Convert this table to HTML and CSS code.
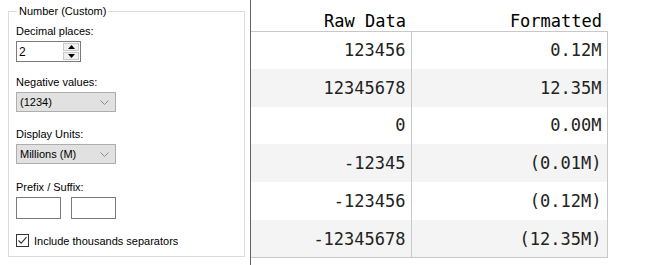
FILE: index.html
```html
<!DOCTYPE html>
<html>
<head>
<meta charset="utf-8">
<link rel="stylesheet" href="styles.css">
</head>
<body>
<div class="app">
  <aside class="panel">
    <fieldset class="group">
      <legend class="legend">Number (Custom)</legend>
      <div class="field f-dec">
        <div class="label">Decimal places:</div>
        <div class="spin">
          <span class="spin-val">2</span>
          <span class="spin-btns">
            <span class="sb"><svg width="7" height="4" viewBox="0 0 7 4"><path d="M3.5 0 L7 4 L0 4 Z" fill="#000"/></svg></span>
            <span class="sb"><svg width="7" height="4" viewBox="0 0 7 4"><path d="M0 0 L7 0 L3.5 4 Z" fill="#000"/></svg></span>
          </span>
        </div>
      </div>
      <div class="field f-neg">
        <div class="label">Negative values:</div>
        <div class="select"><span>(1234)</span><svg class="chev" width="9" height="5" viewBox="0 0 9 5"><path d="M0.5 0.5 L4.5 4.5 L8.5 0.5" fill="none" stroke="#8a8a8a" stroke-width="1"/></svg></div>
      </div>
      <div class="field f-units">
        <div class="label">Display Units:</div>
        <div class="select"><span>Millions (M)</span><svg class="chev" width="9" height="5" viewBox="0 0 9 5"><path d="M0.5 0.5 L4.5 4.5 L8.5 0.5" fill="none" stroke="#8a8a8a" stroke-width="1"/></svg></div>
      </div>
      <div class="field f-fix">
        <div class="label">Prefix / Suffix:</div>
        <div class="fix-row">
          <span class="textbox"></span>
          <span class="textbox"></span>
        </div>
      </div>
      <div class="check-row">
        <span class="checkbox"><svg width="11" height="11" viewBox="0 0 11 11"><path d="M1.5 5.5 L4.2 8.2 L9.5 2.2" fill="none" stroke="#333" stroke-width="1.1"/></svg></span>
        <span class="check-label">Include thousands separators</span>
      </div>
    </fieldset>
  </aside>
  <div class="divider"></div>
  <main class="grid-area">
    <table class="grid">
      <thead>
        <tr><th class="c1">Raw Data</th><th class="c2">Formatted</th></tr>
      </thead>
      <tbody>
        <tr><td class="c1">123456</td><td class="c2">0.12M</td></tr>
        <tr class="alt"><td class="c1">12345678</td><td class="c2">12.35M</td></tr>
        <tr><td class="c1">0</td><td class="c2">0.00M</td></tr>
        <tr class="alt"><td class="c1">-12345</td><td class="c2">(0.01M)</td></tr>
        <tr><td class="c1">-123456</td><td class="c2">(0.12M)</td></tr>
        <tr class="alt"><td class="c1">-12345678</td><td class="c2">(12.35M)</td></tr>
      </tbody>
    </table>
  </main>
</div>
</body>
</html>
```
FILE: styles.css
```css
html, body {
  margin: 0;
  padding: 0;
  background: #fff;
}
.app {
  display: flex;
  width: 648px;
  height: 265px;
  overflow: hidden;
}
.panel {
  width: 250px;
  flex: none;
  font-family: "Liberation Sans", Arial, sans-serif;
  font-size: 11px;
  color: #000;
}
.group {
  margin: 4px 0 0 8px;
  width: 237px;
  height: 253px;
  box-sizing: border-box;
  border: 1px solid #dcdcdc;
  padding: 0 7px;
  min-width: 0;
}
.legend {
  padding: 0 2px;
  margin-left: 1px;
  line-height: 14px;
  height: 14px;
}
.label {
  line-height: 14px;
  height: 14px;
  margin-bottom: 3px;
}
.f-dec { margin-top: 6px; }
.f-neg { margin-top: 13px; }
.f-units { margin-top: 15px; }
.f-fix { margin-top: 16px; }

.spin {
  width: 65px;
  height: 21px;
  box-sizing: border-box;
  border: 1px solid #7a7a7a;
  display: flex;
  align-items: center;
  background: #fff;
}
.spin-val {
  flex: 1;
  padding-left: 2px;
  font-size: 12px;
}
.spin-btns {
  display: flex;
  flex-direction: column;
  width: 16px;
  height: 17px;
  margin-right: 1px;
  gap: 1px;
}
.sb {
  flex: 1;
  display: flex;
  align-items: center;
  justify-content: center;
  background: #f0f0f0;
  border: 1px solid #c9c9c9;
  box-sizing: border-box;
}
.select {
  width: 100px;
  height: 20px;
  box-sizing: border-box;
  border: 1px solid #adadad;
  background: #e1e1e1;
  display: flex;
  align-items: center;
  justify-content: space-between;
  padding: 0 6px 0 3px;
}
.chev { display: block; }
.fix-row {
  display: flex;
  gap: 10px;
}
.textbox {
  width: 45px;
  height: 22px;
  box-sizing: border-box;
  border: 1px solid #7a7a7a;
  background: #fff;
}
.check-row {
  display: flex;
  align-items: center;
  margin-top: 15px;
  gap: 5px;
}
.checkbox {
  width: 13px;
  height: 13px;
  box-sizing: border-box;
  border: 1px solid #333;
  display: flex;
  align-items: center;
  justify-content: center;
  background: #fff;
}
.checkbox svg { display: block; }
.divider {
  width: 1px;
  flex: none;
  background: #646464;
}
.grid-area {
  flex: none;
}
.grid {
  border-collapse: collapse;
  font-family: "DejaVu Sans Mono", "Liberation Mono", monospace;
  font-size: 17px;
  color: #222;
}
.grid th {
  font-weight: normal;
  color: #000;
  text-align: right;
  height: 31px;
  padding: 0 5px 0 0;
  box-sizing: border-box;
  border-bottom: 1px solid #c8c8c8;
  line-height: 20px;
  vertical-align: bottom;
}
.grid td {
  text-align: right;
  height: 37.8px;
  padding: 0 5px 0 0;
  box-sizing: border-box;
  border-right: 1px solid #c8c8c8;
  line-height: 20px;
}
.grid tbody tr:last-child td { border-bottom: 1px solid #c8c8c8; }
.grid .alt td { background: #f4f4f4; }
.grid .c1 { width: 160px; }
.grid .c2 { width: 196px; }
```
